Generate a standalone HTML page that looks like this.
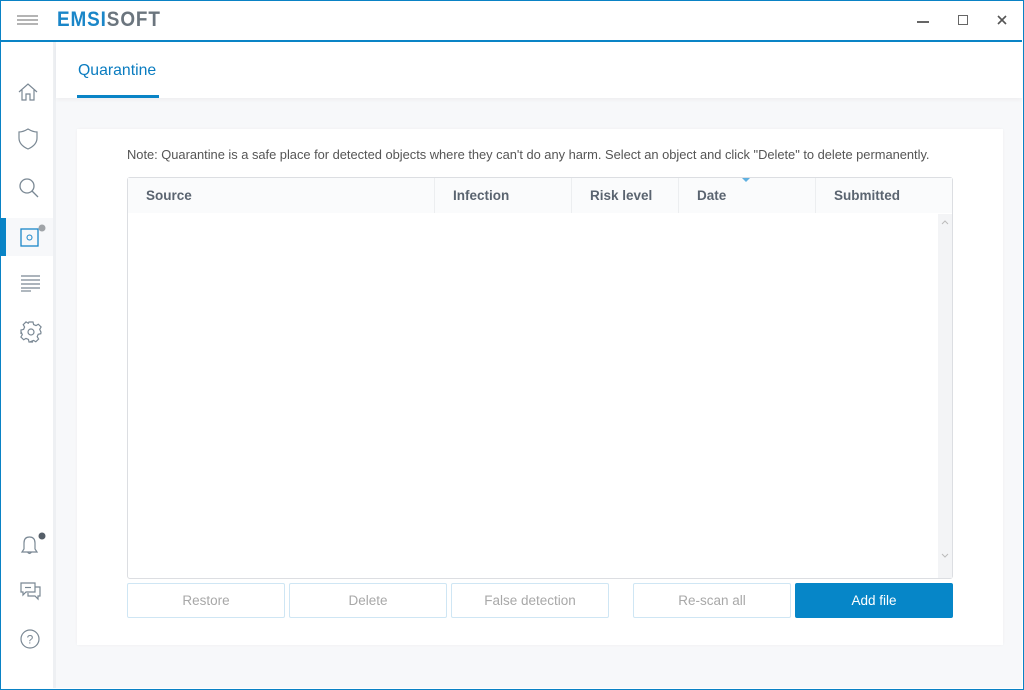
<!DOCTYPE html>
<html><head><meta charset="utf-8"><style>
*{margin:0;padding:0;box-sizing:border-box}
body{width:1024px;height:690px;overflow:hidden;font-family:"Liberation Sans",sans-serif;background:#fff;position:relative}
.win{position:absolute;inset:0;border:1px solid #0a82c5;}
.top{position:absolute;left:0;top:0;width:1022px;height:40px;background:#fff}
.blue{position:absolute;left:0;top:40px;width:1022px;height:2px;background:#0a84c6}
.side{position:absolute;left:0;top:42px;width:53px;height:646px;background:#fff}
.sep{position:absolute;left:53px;top:42px;width:3px;height:646px;background:#eef0f3}
.main{position:absolute;left:56px;top:42px;width:966px;height:646px;background:#f7f8fa}
.hdr{position:absolute;left:0;top:0;width:966px;height:56px;background:#fff;box-shadow:0 2px 4px rgba(0,0,0,.04)}
.tab{position:absolute;left:22px;top:20px;font-size:15.8px;color:#0a7cc0}
.tabline{position:absolute;left:21px;top:53px;width:82px;height:3px;background:#0a84c6}
.card{position:absolute;left:21px;top:87px;width:926px;height:516px;background:#fff;box-shadow:0 0 3px rgba(0,0,0,.04)}
.note{position:absolute;left:50px;top:18px;font-size:12.9px;color:#555;white-space:nowrap;letter-spacing:-.02px}
.tbl{position:absolute;left:50px;top:48px;width:826px;height:402px;border:1px solid #dcdee2;border-radius:3px;background:#fff}
.th{position:absolute;top:0;height:35px;background:#fafbfc;border-right:1px solid #eceef0;font-size:13.5px;color:#5a6470;font-weight:bold;padding:10px 0 0 18px}
.sb{position:absolute;right:0;top:36px;width:14px;height:364px;background:#f3f4f6}
.btn{position:absolute;top:454px;height:35px;border:1px solid #cfe6f4;border-radius:2px;background:#fff;color:#a8a8a8;font-size:13.5px;text-align:center;line-height:33px}
.ic{position:absolute;left:18px}
</style></head><body>
<div class="top">
 <svg style="position:absolute;left:17px;top:15px" width="22" height="10"><g stroke="#888" stroke-width="1.2"><line x1="0" y1="1" x2="21" y2="1"/><line x1="0" y1="5" x2="21" y2="5"/><line x1="0" y1="9" x2="21" y2="9"/></g></svg>
 <div style="position:absolute;left:57px;top:8px;font-size:21px;font-weight:bold;letter-spacing:1px;transform:scaleX(.9);transform-origin:left"><span style="color:#1a86c8">EMSI</span><span style="color:#6b757e">SOFT</span></div>
 <div style="position:absolute;left:917px;top:21px;width:12px;height:2px;background:#666"></div>
 <div style="position:absolute;left:958px;top:15px;width:10px;height:10px;border:1.5px solid #666"></div>
 <svg style="position:absolute;left:997px;top:15px" width="10" height="10" stroke="#555" stroke-width="1.6"><line x1="1" y1="1" x2="9" y2="9"/><line x1="9" y1="1" x2="1" y2="9"/></svg>
</div>
<div class="blue"></div>
<div class="side">
 <svg class="ic" style="top:40px" width="20" height="20" fill="none" stroke="#7a8894" stroke-width="1.2"><path d="M1 10 L10 2 L19 10 M4 8 V18 H8 V12 H12 V18 H16 V8"/></svg>
 <svg class="ic" style="top:86px" width="20" height="22" fill="none" stroke="#7a8894" stroke-width="1.2"><path d="M10 1 Q15 4 19 4 V10 Q19 17 10 21 Q1 17 1 10 V4 Q5 4 10 1Z"/></svg>
 <svg class="ic" style="top:135px" width="22" height="22" fill="none" stroke="#7a8894" stroke-width="1.3"><circle cx="9" cy="9" r="7"/><line x1="14" y1="14" x2="20" y2="20"/></svg>
 <div style="position:absolute;left:0;top:176px;width:53px;height:38px;background:#f7f8fa"></div>
 <div style="position:absolute;left:0;top:176px;width:6px;height:38px;background:#0a84c6"></div>
 <svg class="ic" style="top:182px;left:20px" width="26" height="24" fill="none"><rect x="1" y="5" width="17" height="17" stroke="#1a86c8" stroke-width="1.3"/><circle cx="9.5" cy="13.5" r="2.5" stroke="#1a86c8"/><circle cx="22" cy="4" r="3.5" fill="#a0a4a8"/></svg>
 <svg class="ic" style="top:232px;left:21px" width="20" height="18" stroke="#7a8894" stroke-width="1.2"><line x1="0" y1="2" x2="19" y2="2"/><line x1="0" y1="6" x2="19" y2="6"/><line x1="0" y1="10" x2="19" y2="10"/><line x1="0" y1="14" x2="19" y2="14"/><line x1="0" y1="17" x2="10" y2="17"/></svg>
 <svg class="ic" style="top:279px;left:20px" width="22" height="22" fill="none" stroke="#7a8894" stroke-width="1.2"><circle cx="11" cy="11" r="3"/><path d="M9 1h4l.6 2.6 2.4 1 2.3-1.4 2.8 2.8-1.4 2.3 1 2.4L21 11v0l-.2 1.7-2.6.6-1 2.4 1.4 2.3-2.8 2.8-2.3-1.4-2.4 1L13 21H9l-.6-2.6-2.4-1-2.3 1.4-2.8-2.8 1.4-2.3-1-2.4L1 13V9l2.6-.6 1-2.4L3.2 3.7 6 .9l2.3 1.4 .1-.1z"/></svg>
 <svg class="ic" style="top:490px;left:20px" width="28" height="24" fill="none"><path d="M2 20 H17 L15 17 V11 Q15 5 9.5 5 Q4 5 4 11 V17 Z M7.5 20 Q9.5 23 11.5 20" stroke="#7a8894" stroke-width="1.2"/><circle cx="22" cy="4" r="3.5" fill="#555e68"/></svg>
 <svg class="ic" style="top:540px;left:20px" width="22" height="20" fill="none" stroke="#7a8894" stroke-width="1.2"><path d="M1 1h14v9H6l-3 3v-3H1z M15 5h5v9h-2v3l-3-3H8v-3"/><line x1="5" y1="5.5" x2="11" y2="5.5"/></svg>
 <svg class="ic" style="top:587px;left:20px" width="22" height="22" fill="none" stroke="#7a8894" stroke-width="1.2"><circle cx="10" cy="10" r="9"/><text x="10" y="14.5" font-size="12" text-anchor="middle" fill="#7a8894" stroke="none" font-family="Liberation Sans">?</text></svg>
</div>
<div class="sep"></div>
<div class="main">
 <div class="hdr"><div class="tab">Quarantine</div><div class="tabline"></div></div>
 <div class="card">
  <div class="note">Note: Quarantine is a safe place for detected objects where they can't do any harm. Select an object and click "Delete" to delete permanently.</div>
  <div class="tbl">
   <div class="th" style="left:0;width:307px">Source</div>
   <div class="th" style="left:307px;width:137px">Infection</div>
   <div class="th" style="left:444px;width:107px">Risk level</div>
   <div class="th" style="left:551px;width:137px">Date</div>
   <div class="th" style="left:688px;width:136px;border-right:none">Submitted</div>
   <div style="position:absolute;left:614px;top:0;width:0;height:0;border-left:4px solid transparent;border-right:4px solid transparent;border-top:4px solid #5fb0e0"></div>
   <div class="sb">
    <svg style="position:absolute;left:3px;top:6px" width="8" height="5" fill="none" stroke="#bbb"><path d="M1 4 L4 1 L7 4"/></svg>
    <svg style="position:absolute;left:3px;top:339px" width="8" height="5" fill="none" stroke="#bbb"><path d="M1 1 L4 4 L7 1"/></svg>
   </div>
  </div>
  <div class="btn" style="left:50px;width:158px">Restore</div>
  <div class="btn" style="left:212px;width:158px">Delete</div>
  <div class="btn" style="left:374px;width:158px">False detection</div>
  <div class="btn" style="left:556px;width:158px">Re-scan all</div>
  <div class="btn" style="left:718px;width:158px;background:#0686c8;border-color:#0686c8;color:#fff">Add file</div>
 </div>
</div>
<div class="win"></div>
</body></html>
